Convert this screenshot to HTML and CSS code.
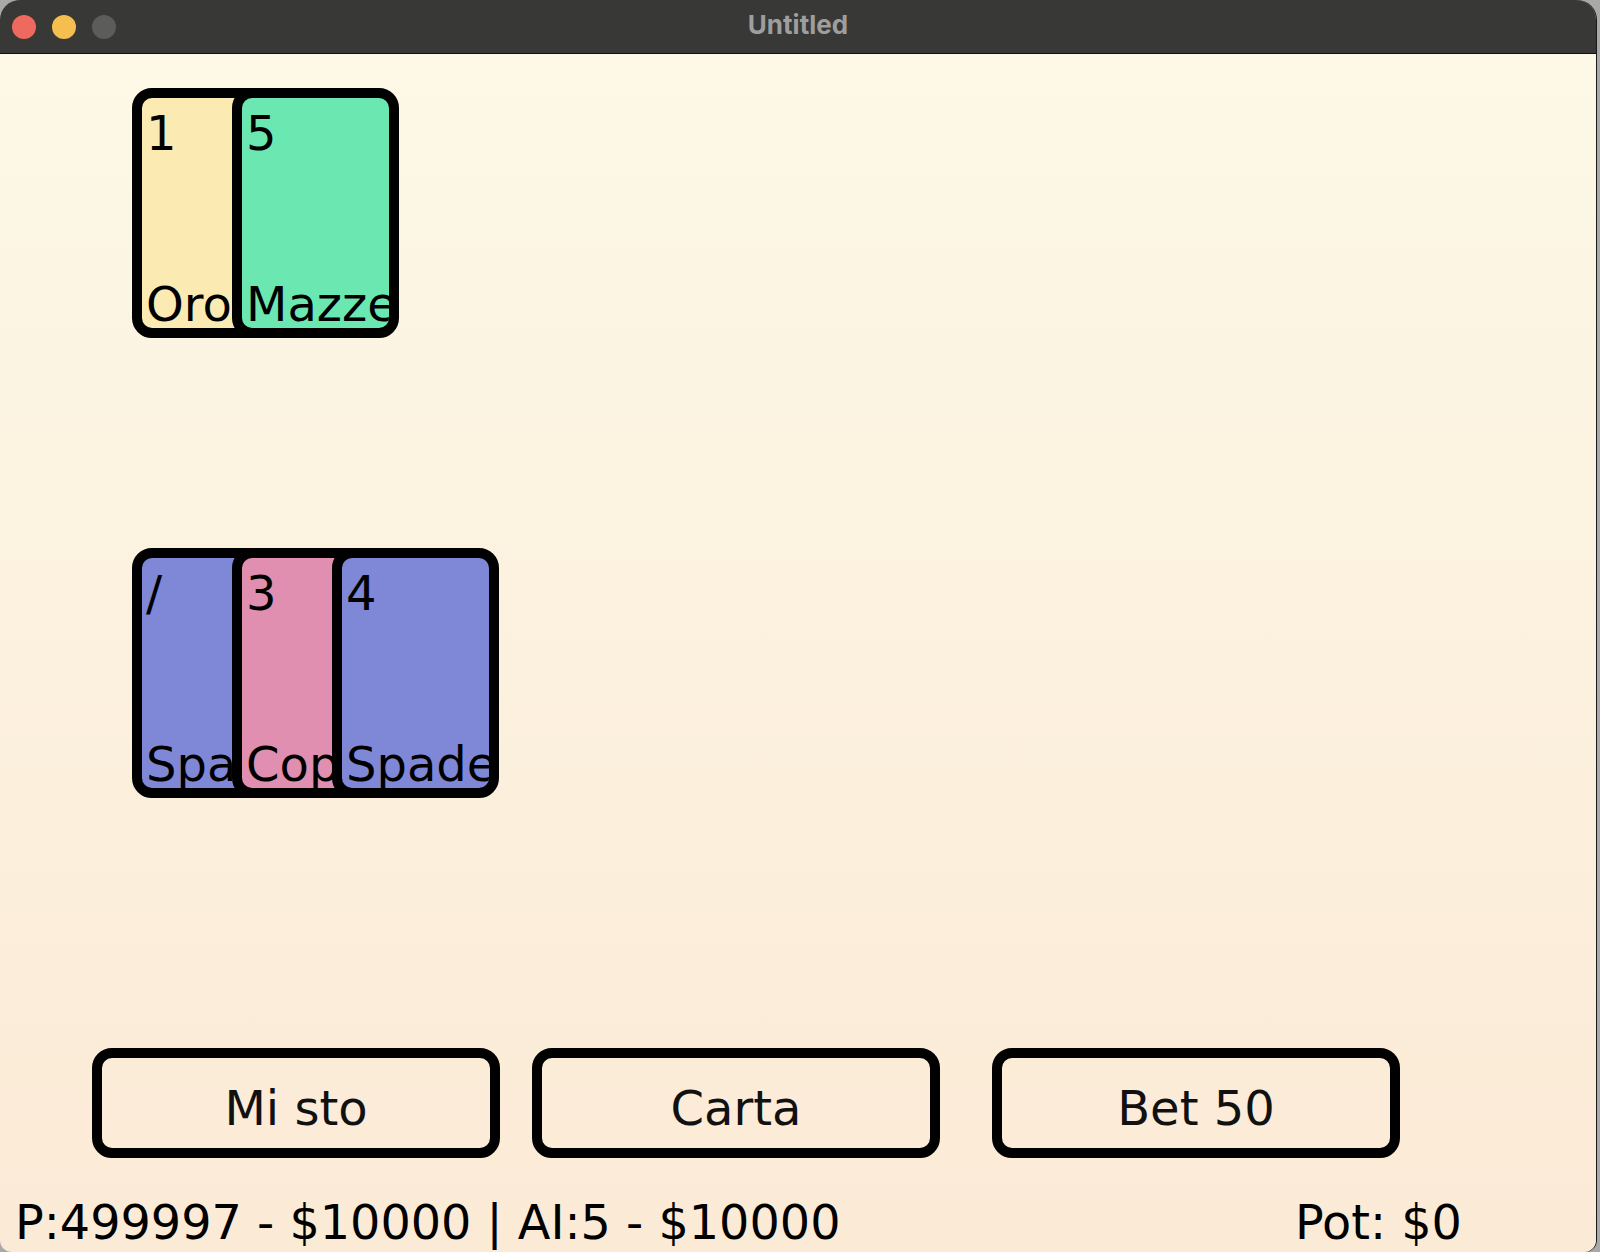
FILE: index.html
```html
<!DOCTYPE html>
<html lang="it">
<head>
<meta charset="utf-8">
<title>Untitled</title>
<link rel="stylesheet" href="styles.css">
</head>
<body>
<div class="window">
  <div class="titlebar">
    <div class="lights">
      <span class="light red"></span>
      <span class="light yellow"></span>
      <span class="light grey"></span>
    </div>
    <div class="title">Untitled</div>
    <div></div>
  </div>
  <div class="content">
    <div class="hand hand-ai">
      <div class="card oro"><span class="label">1</span><span class="label">Oro</span></div>
      <div class="card mazze"><span class="label">5</span><span class="label">Mazze</span></div>
    </div>
    <div class="hand hand-player">
      <div class="card spade"><span class="label">/</span><span class="label">Spade</span></div>
      <div class="card coppe"><span class="label">3</span><span class="label">Coppe</span></div>
      <div class="card spade"><span class="label">4</span><span class="label">Spade</span></div>
    </div>
    <div class="actions">
      <button class="btn">Mi sto</button>
      <button class="btn btn-carta">Carta</button>
      <button class="btn btn-bet">Bet 50</button>
    </div>
    <div class="status">
      <div class="status-left">P:499997 - $10000 | AI:5 - $10000</div>
      <div class="pot">Pot: $0</div>
    </div>
  </div>
</div>
</body>
</html>
```

FILE: styles.css
```css
html, body {
  margin: 0;
  padding: 0;
}
body {
  width: 1600px;
  height: 1252px;
  overflow: hidden;
  background: #a9a9a9;
}
.window {
  width: 1596px;
  height: 1252px;
  box-sizing: border-box;
  border-radius: 20px 20px 12px 12px;
  overflow: hidden;
  display: flex;
  flex-direction: column;
  box-shadow: 1px 0 0 #1a1a1a;
}
.titlebar {
  height: 54px;
  box-sizing: border-box;
  background: #383836;
  border-bottom: 1px solid #111;
  display: grid;
  grid-template-columns: 1fr auto 1fr;
  align-items: center;
}
.lights {
  display: flex;
  gap: 16px;
  padding-left: 12px;
}
.light {
  width: 24px;
  height: 24px;
  border-radius: 50%;
}
.red { background: #ee695e; }
.yellow { background: #f5bf4f; }
.grey { background: #5c5c5a; }
.title {
  font-family: Inter, "Open Sans", sans-serif;
  font-weight: 700;
  font-size: 26px;
  color: #9e9e9e;
  padding-bottom: 4px;
}
.content {
  flex: 1;
  background: linear-gradient(#fdf8e7, #fbead6);
  padding-top: 34px;
  display: flex;
  flex-direction: column;
  font-family: "DejaVu Sans", sans-serif;
  font-size: 48px;
  color: #000;
}
.hand {
  display: flex;
  padding-left: 132px;
}
.hand-player {
  margin-top: 210px;
}
.card {
  width: 167px;
  height: 250px;
  box-sizing: border-box;
  border: 10px solid #000;
  border-radius: 20px;
  padding: 11px 0 0 4px;
  display: flex;
  flex-direction: column;
  justify-content: space-between;
  overflow: hidden;
  flex-shrink: 0;
}
.card + .card {
  margin-left: -67px;
}
.label {
  line-height: 48px;
  white-space: nowrap;
}
.oro { background: #fbeab1; }
.mazze { background: #6be8b1; }
.spade { background: #7f88d6; }
.coppe { background: #e08fb1; }
.actions {
  display: flex;
  margin-top: 250px;
  padding-left: 92px;
}
.btn {
  width: 408px;
  height: 110px;
  box-sizing: border-box;
  border: 10px solid #000;
  border-radius: 20px;
  background: transparent;
  font-family: "DejaVu Sans", sans-serif;
  font-size: 48px;
  color: #111;
  padding: 10px 0 0 0;
  line-height: 56px;
}
.btn-carta { margin-left: 32px; }
.btn-bet { margin-left: 52px; }
.status {
  display: flex;
  margin-top: 37px;
  padding-left: 15px;
  font-size: 47.7px;
  line-height: 56px;
  white-space: nowrap;
}
.status-left {
  width: 1280px;
}
```
